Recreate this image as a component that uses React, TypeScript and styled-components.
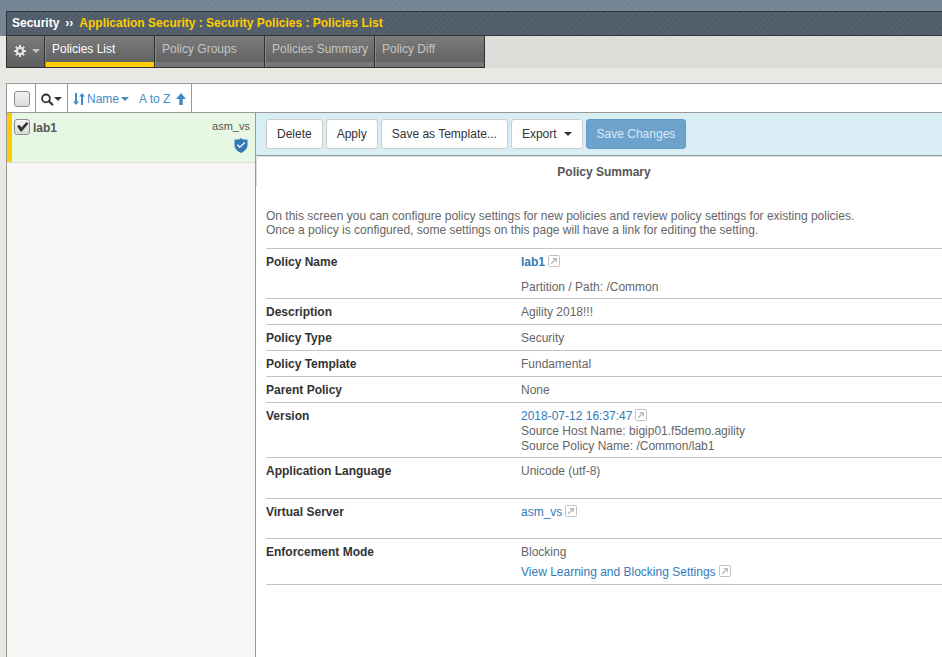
import React from "react";
import styled, { createGlobalStyle } from "styled-components";

const GlobalStyle = createGlobalStyle`
  *, *::before, *::after { box-sizing: border-box; }
  body {
    margin: 0;
    background: #e9e8e3;
    color: #666;
    font: 12px/15px "Liberation Sans", Arial, Helvetica, sans-serif;
  }
  button, input { font: inherit; }
`;

const Page = styled.div`
  display: flex;
  flex-direction: column;
  min-height: 100vh;
`;

const stripes =
  "repeating-linear-gradient(135deg, rgba(255,255,255,0.04) 0 1px, transparent 2px 4px)";

const Header = styled.header`
  padding: 11px 0 0 6px;
  background: ${stripes}, #738495;
`;

const Breadcrumb = styled.nav`
  display: flex;
  align-items: center;
  gap: 6px;
  height: 25px;
  padding-left: 5px;
  border: solid #2f3439;
  border-width: 1px 0 1px 1px;
  background: ${stripes}, #505c69;
  color: #fff;
  font-weight: bold;
`;

const Trail = styled.span`
  color: #fc0;
`;

const TabStrip = styled.div`
  display: flex;
  margin-left: 6px;
  background: #dddcd8;
`;

const TabBar = styled.nav`
  display: flex;
  height: 32px;
  border: solid #2f3233;
  border-width: 0 1px 1px;
`;

const GearButton = styled.button`
  display: flex;
  align-items: center;
  gap: 5px;
  width: 37px;
  padding: 0 0 2px 6px;
  border: 0;
  background: linear-gradient(#7b7b7b, #5e5e5e);
`;

const Tab = styled.a<{ $active?: boolean }>`
  width: 110px;
  padding: 6px 0 0 7px;
  border-left: 1px solid #2f3233;
  background: linear-gradient(
    ${(p) => (p.$active ? "#fc0, #fc0" : "#777, #777")}
  ) bottom / 100% 5px no-repeat, linear-gradient(#7b7b7b, #5e5e5e);
  box-shadow: inset 1px 0 #8a8a8a;
  color: ${(p) => (p.$active ? "#fff" : "#c4c4c4")};
  text-decoration: none;
  white-space: nowrap;
`;

const Workspace = styled.main`
  display: flex;
  flex-direction: column;
  flex: 1;
  margin: 15px 0 0 6px;
  border: solid #999;
  border-width: 1px 0 0 1px;
  background: #fff;
`;

const FilterBar = styled.div`
  display: flex;
  height: 29px;
  border-bottom: 1px solid #999;
`;

const FilterCell = styled.div`
  display: flex;
  align-items: center;
  gap: 10px;
  padding: 2px 5px 0;
  border-right: 1px solid #999;

  &:first-child { padding-left: 7px; }
`;

const PlainButton = styled.button<{ $dark?: boolean }>`
  display: flex;
  align-items: center;
  gap: ${(p) => (p.$dark ? 0 : 2)}px;
  padding: 0;
  border: 0;
  background: none;
  color: ${(p) => (p.$dark ? "#333" : "#428bca")};
`;

const Columns = styled.div`
  display: flex;
  flex: 1;
`;

const Sidebar = styled.aside`
  width: 249px;
  flex: none;
  border-right: 1px solid #999;
  background: #f7f6f4;
`;

const PolicyItem = styled.div`
  display: flex;
  gap: 3px;
  height: 50px;
  padding: 6px 5px 0 7px;
  border-bottom: 1px solid #ddd;
  background: #e6f7e4;
  box-shadow: inset 5px 0 #fc0;
  color: #555;
`;

const PolicyLabel = styled.label`
  flex: 1;
  padding-top: 2px;
  font-weight: bold;
`;

const PolicyServer = styled.div`
  display: flex;
  flex-direction: column;
  align-items: flex-end;
  gap: 4px;
  font-size: 11px;

  svg { margin-right: 2px; }
`;

const CheckFrame = styled.span`
  position: relative;
  display: flex;
  width: 16px;
  height: 16px;

  svg {
    position: absolute;
    top: 0;
    left: 0;
    pointer-events: none;
  }
  input:not(:checked) + svg { display: none; }
`;

const CheckInput = styled.input`
  appearance: none;
  width: 16px;
  height: 16px;
  margin: 0;
  border: 1px solid #8d8d8d;
  border-radius: 3px;
  background: linear-gradient(#f4f4f4, #dadada);
`;

const Content = styled.section`
  flex: 1;
  min-width: 0;
`;

const ActionBar = styled.div`
  display: flex;
  align-items: center;
  gap: 3px;
  height: 43px;
  padding-left: 10px;
  border-bottom: 1px solid #999;
  background: #d9edf5;
`;

const ActionButton = styled.button<{ $primary?: boolean }>`
  display: flex;
  align-items: center;
  gap: 7px;
  height: 30px;
  padding: 0 10px;
  border: 1px solid ${(p) => (p.$primary ? "#669ac6" : "#ccc")};
  border-radius: 3px;
  background: ${(p) => (p.$primary ? "#6da2cd" : "#fff")};
  color: ${(p) => (p.$primary ? "#d9e9f5" : "#333")};
  white-space: nowrap;
`;

const PanelTitle = styled.h1`
  height: 30px;
  margin: 0;
  padding: 8px 0 0 9px;
  border: solid #ddd;
  border-width: 1px 0 0 1px;
  border-top-left-radius: 4px;
  color: #555;
  font-size: 12px;
  line-height: 15px;
  text-align: center;
`;

const PanelBody = styled.div`
  padding: 23px 0 20px 10px;
`;

const Intro = styled.p`
  margin: 0 0 11px;
  line-height: 14px;
`;

const Settings = styled.table`
  width: 100%;
  border-spacing: 0;
  border-top: 1px solid #c4c4c4;
`;

const Label = styled.th`
  width: 255px;
  padding: 6px 0 4px;
  border-bottom: 1px solid #c4c4c4;
  color: #333;
  text-align: left;
  vertical-align: top;
`;

const Value = styled.td<{ $space?: number }>`
  padding: 6px 0 ${(p) => p.$space ?? 3}px;
  border-bottom: 1px solid #c4c4c4;
  vertical-align: top;
`;

const Line = styled.div<{ $gap?: number }>`
  display: flex;
  align-items: flex-start;
  gap: 3px;
  margin-top: ${(p) => p.$gap ?? 0}px;
`;

const Link = styled.a<{ $bold?: boolean }>`
  color: #337ab7;
  font-weight: ${(p) => (p.$bold ? "bold" : "normal")};
  text-decoration: none;
`;

const Caret = ({ color = "currentColor" }: { color?: string }) => (
  <svg width="8" height="4" viewBox="0 0 8 4" aria-hidden="true">
    <path d="M0 0H8L4 4Z" fill={color} />
  </svg>
);

const GearIcon = () => (
  <svg width="14" height="14" viewBox="0 0 14 14" fill="none" stroke="#e2e2e2" aria-hidden="true">
    <circle cx="7" cy="7" r="3.2" strokeWidth="2.2" />
    <path d="M7 1V3M7 11V13M1 7H3M11 7H13M2.8 2.8L4.2 4.2M9.8 9.8L11.2 11.2M11.2 2.8L9.8 4.2M4.2 9.8L2.8 11.2" strokeWidth="2" />
  </svg>
);

const SearchIcon = () => (
  <svg width="13" height="13" viewBox="0 0 13 13" fill="none" stroke="currentColor" aria-hidden="true">
    <circle cx="5" cy="5.4" r="3.9" strokeWidth="1.8" />
    <path d="M8 8.3L11.3 11.5" strokeWidth="2.2" strokeLinecap="round" />
  </svg>
);

const SortIcon = () => (
  <svg width="12" height="12" viewBox="0 0 12 12" aria-hidden="true">
    <path d="M2 0H4V8.5H6L3 12L0 8.5H2ZM8 12H10V3.5H12L9 0L6 3.5H8Z" fill="#428bca" />
  </svg>
);

const UpIcon = () => (
  <svg width="10" height="12" viewBox="0 0 10 12" aria-hidden="true">
    <path d="M5 0L10 6H6.7V12H3.3V6H0Z" fill="#428bca" />
  </svg>
);

const ShieldIcon = () => (
  <svg width="14" height="15" viewBox="0 0 14 15" aria-hidden="true">
    <path d="M7 0L9 1.4L13.5 1.6V7C13.5 10.5 11 13 7 15C3 13 0.5 10.5 0.5 7V1.6L5 1.4Z" fill="#337ab7" />
    <path d="M3.3 6.7L5.8 9.2L10.8 4.6" fill="none" stroke="#fff" strokeWidth="1.3" />
  </svg>
);

const OpenIcon = () => (
  <svg width="12" height="12" viewBox="0 0 12 12" fill="none" aria-hidden="true">
    <rect x="0.5" y="0.5" width="11" height="11" rx="1" stroke="#c2c2c2" />
    <path d="M3.2 8.8L6.5 5.5" stroke="#bbb" strokeWidth="1.5" />
    <path d="M4.2 3H9V7.8Z" fill="#bbb" />
  </svg>
);

type CheckProps = { id?: string; label?: string; checked?: boolean };

const Checkbox = ({ id, label, checked }: CheckProps) => (
  <CheckFrame>
    <CheckInput type="checkbox" id={id} aria-label={label} defaultChecked={checked} />
    <svg width="16" height="16" viewBox="0 0 16 16" aria-hidden="true">
      <path d="M3 7L5.5 6L7.5 8.5L12.5 3L14.5 4.5L7.7 12.5H6.5Z" fill="#333" />
    </svg>
  </CheckFrame>
);

const ExternalLink = ({ children, bold }: { children: React.ReactNode; bold?: boolean }) => (
  <>
    <Link href="#" $bold={bold}>{children}</Link>
    <OpenIcon />
  </>
);

const tabs = ["Policies List", "Policy Groups", "Policies Summary", "Policy Diff"];

const simpleRows = [
  ["Description", "Agility 2018!!!"],
  ["Policy Type", "Security"],
  ["Policy Template", "Fundamental"],
  ["Parent Policy", "None"],
];

export default function App() {
  return (
    <Page>
      <GlobalStyle />
      <Header>
        <Breadcrumb aria-label="Breadcrumb">
          <span>Security</span>
          <span>››</span>
          <Trail>Application Security : Security Policies : Policies List</Trail>
        </Breadcrumb>
      </Header>
      <TabStrip>
        <TabBar aria-label="Policies">
          <GearButton aria-label="Options"><GearIcon /><Caret color="#c4c4c4" /></GearButton>
          {tabs.map((name, i) => (
            <Tab key={name} href="#" $active={i === 0}>{name}</Tab>
          ))}
        </TabBar>
      </TabStrip>
      <Workspace>
        <FilterBar>
          <FilterCell><Checkbox label="Select all policies" /></FilterCell>
          <FilterCell>
            <PlainButton $dark aria-label="Search"><SearchIcon /><Caret /></PlainButton>
          </FilterCell>
          <FilterCell>
            <PlainButton><SortIcon />Name<Caret /></PlainButton>
            <PlainButton>A to Z&nbsp;<UpIcon /></PlainButton>
          </FilterCell>
        </FilterBar>
        <Columns>
          <Sidebar>
            <PolicyItem>
              <Checkbox id="policy-lab1" checked />
              <PolicyLabel htmlFor="policy-lab1">lab1</PolicyLabel>
              <PolicyServer>asm_vs<ShieldIcon /></PolicyServer>
            </PolicyItem>
          </Sidebar>
          <Content>
            <ActionBar>
              <ActionButton>Delete</ActionButton>
              <ActionButton>Apply</ActionButton>
              <ActionButton>Save as Template...</ActionButton>
              <ActionButton>Export<Caret /></ActionButton>
              <ActionButton $primary>Save Changes</ActionButton>
            </ActionBar>
            <PanelTitle>Policy Summary</PanelTitle>
            <PanelBody>
              <Intro>
                On this screen you can configure policy settings for new policies and review policy settings for existing policies.
                <br />
                Once a policy is configured, some settings on this page will have a link for editing the setting.
              </Intro>
              <Settings>
                <tbody>
                  <tr>
                    <Label scope="row">Policy Name</Label>
                    <Value>
                      <Line><ExternalLink bold>lab1</ExternalLink></Line>
                      <Line $gap={10}>Partition / Path: /Common</Line>
                    </Value>
                  </tr>
                  {simpleRows.map(([name, value]) => (
                    <tr key={name}>
                      <Label scope="row">{name}</Label>
                      <Value>{value}</Value>
                    </tr>
                  ))}
                  <tr>
                    <Label scope="row">Version</Label>
                    <Value>
                      <Line><ExternalLink>2018-07-12 16:37:47</ExternalLink></Line>
                      <Line>Source Host Name: bigip01.f5demo.agility</Line>
                      <Line>Source Policy Name: /Common/lab1</Line>
                    </Value>
                  </tr>
                  <tr>
                    <Label scope="row">Application Language</Label>
                    <Value $space={19}>Unicode (utf-8)</Value>
                  </tr>
                  <tr>
                    <Label scope="row">Virtual Server</Label>
                    <Value $space={18}><Line><ExternalLink>asm_vs</ExternalLink></Line></Value>
                  </tr>
                  <tr>
                    <Label scope="row">Enforcement Mode</Label>
                    <Value $space={4}>
                      <Line>Blocking</Line>
                      <Line $gap={5}><ExternalLink>View Learning and Blocking Settings</ExternalLink></Line>
                    </Value>
                  </tr>
                </tbody>
              </Settings>
            </PanelBody>
          </Content>
        </Columns>
      </Workspace>
    </Page>
  );
}
